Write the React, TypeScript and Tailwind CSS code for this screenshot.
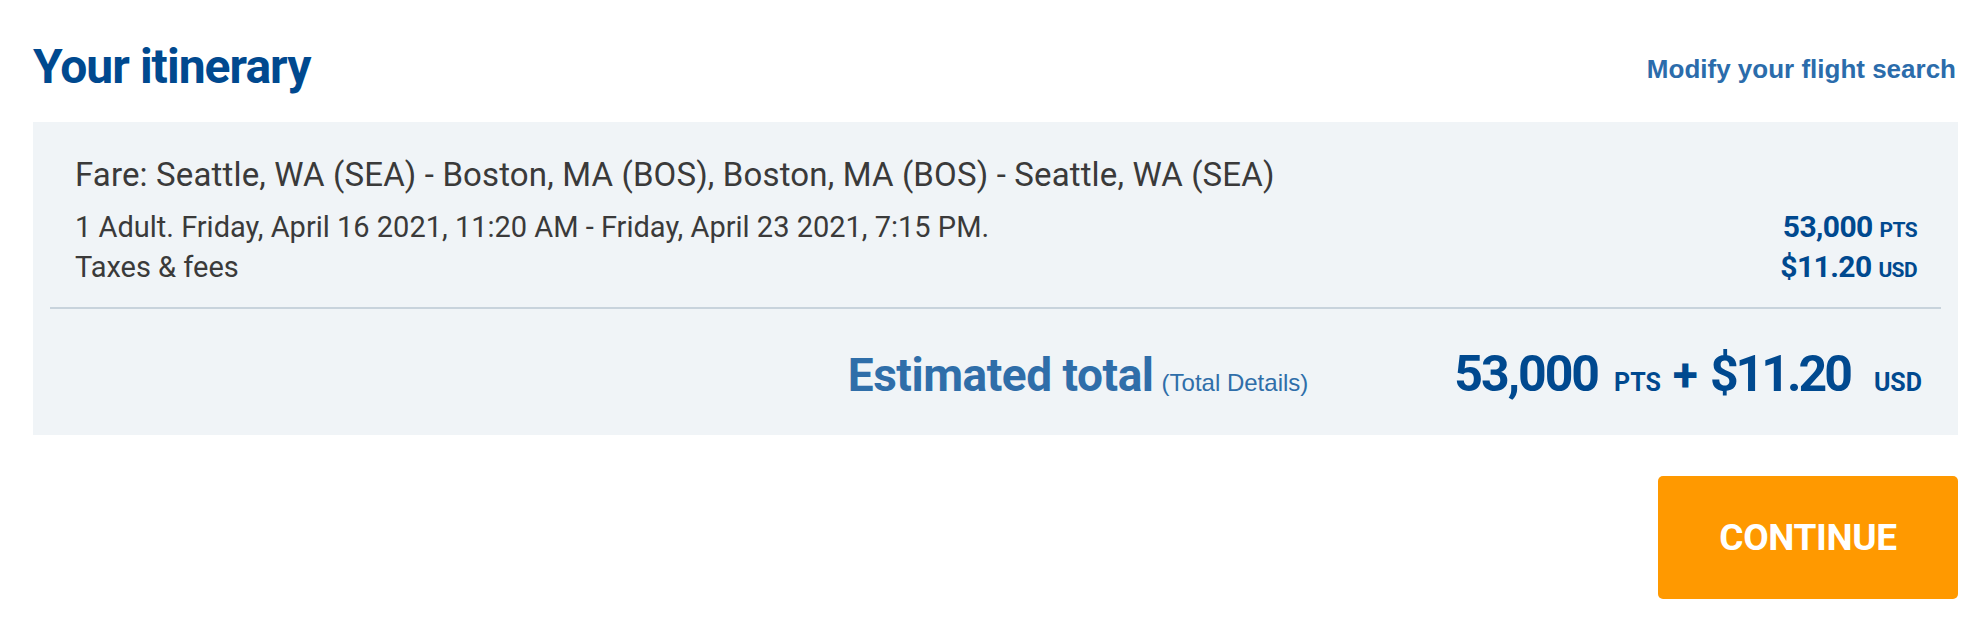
import React from "react";

const din = { fontFamily: "Roboto, 'Noto Sans', sans-serif" };
const arial = { fontFamily: "'Liberation Sans', Arial, sans-serif" };

export default function App() {
  return (
    <div
      className="w-[1970px] h-[620px] bg-white pl-[33px] pr-[12px]"
      style={din}
    >
      {/* header */}
      <div className="flex justify-between items-start pt-[43px] mb-[31px]">
        <h1 className="text-[48px] leading-[48px] font-bold tracking-[-0.02em] text-[#00498f]">
          Your itinerary
        </h1>
        <a
          href="#"
          className="mt-[13px] mr-[2px] text-[26px] leading-[26px] font-bold text-[#2b6cab]"
          style={arial}
        >
          Modify your flight search
        </a>
      </div>

      {/* itinerary panel */}
      <div className="bg-[#f0f4f7] h-[313px] px-[17px]">
        <div className="pt-[33px] pl-[25px] pr-[24px] text-[#3a3a3a]">
          <p className="text-[33px] leading-[40px] mb-[12px] tracking-[0.15px]">
            Fare: Seattle, WA (SEA) - Boston, MA (BOS), Boston, MA (BOS) -
            Seattle, WA (SEA)
          </p>
          <div className="flex justify-between items-baseline text-[29px] leading-[40px]">
            <span>
              1 Adult. Friday, April 16 2021, 11:20 AM - Friday, April 23 2021,
              7:15 PM.
            </span>
            <span className="font-bold text-[30px] text-[#00498f] tracking-[-0.02em]">
              53,000 <span className="text-[21px] leading-none">PTS</span>
            </span>
          </div>
          <div className="flex justify-between items-baseline text-[29px] leading-[40px]">
            <span>Taxes &amp; fees</span>
            <span className="font-bold text-[30px] text-[#00498f] tracking-[-0.02em]">
              $11.20 <span className="text-[21px] leading-none">USD</span>
            </span>
          </div>
        </div>

        <div className="mt-[20px] h-[2px] bg-[#c8d3dc]" />

        <div className="flex justify-end items-baseline pt-[35px] pr-[19px] leading-[60px]">
          <span className="text-[46px] font-bold text-[#2f6ea9] tracking-[-0.01em]">
            Estimated total
          </span>
          <a
            href="#"
            className="ml-[8px] text-[24px] text-[#2f6ea9]"
            style={arial}
          >
            (Total Details)
          </a>
          <span className="ml-[146px] font-bold text-[#00498f]">
            <span className="text-[50px] tracking-[-0.04em]">53,000</span>
            <span className="text-[25px] ml-[16px]">PTS</span>
            <span className="text-[46px] mx-[12px]">+</span>
            <span className="text-[50px] tracking-[-0.06em]">$11.20</span>
            <span className="text-[25px] ml-[24px]">USD</span>
          </span>
        </div>
      </div>

      {/* continue */}
      <div className="flex justify-end mt-[41px]">
        <button className="w-[300px] h-[123px] rounded-[5px] bg-[#ff9900] text-white text-[37px] font-bold tracking-[-0.01em]">
          CONTINUE
        </button>
      </div>
    </div>
  );
}
